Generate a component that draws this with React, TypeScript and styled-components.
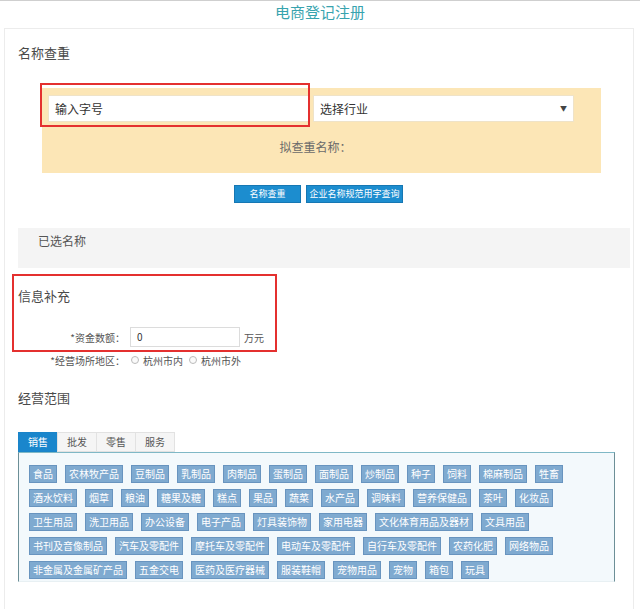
import React from "react";
import styled, { createGlobalStyle } from "styled-components";

const Global = createGlobalStyle`
  html, body { margin: 0; padding: 0; background: #fff; }
  body { font-family: "Noto Sans CJK SC", "Noto Sans", sans-serif; color: #444; }
  * { box-sizing: border-box; }
`;

const Page = styled.div`
  width: 640px;
  height: 609px;
  overflow: hidden;
  border-top: 1px solid #cfcfcf;
`;

const Title = styled.h1`
  margin: 0;
  height: 27px;
  line-height: 22px;
  text-align: center;
  font-size: 15px;
  font-weight: 400;
  color: #38a3ae;
`;

const Panel = styled.div`
  margin: 0 6px 0 4px;
  border: 1px solid #ececec;
  border-bottom: none;
  padding: 16px 0 0 13px;
  height: 582px;
`;

const Heading = styled.div<{ $mt?: number }>`
  margin-top: ${(p) => p.$mt ?? 0}px;
  font-size: 13px;
  line-height: 16px;
  color: #4a4a4a;
`;

const QueryBox = styled.div`
  position: relative;
  margin: 27px 0 0 24px;
  width: 559px;
  background: #fce6b6;
  padding: 7px 6px 18px;
`;

const InputRow = styled.div`
  display: flex;
  gap: 3px;
`;

const TextField = styled.div<{ $w: number }>`
  width: ${(p) => p.$w}px;
  height: 27px;
  background: #fff;
  border: 1px solid #efe3c8;
  font-size: 12px;
  line-height: 25px;
  padding-left: 6px;
  color: #333;
  position: relative;
`;

const Arrow = styled.span`
  position: absolute;
  right: 6px;
  top: 0;
  font-size: 7px;
  color: #444;
`;

const Caption = styled.div`
  margin-top: 17px;
  line-height: 16px;
  text-align: center;
  font-size: 12px;
  color: #6a6a6a;
  padding-right: 12px;
`;

const Annotation = styled.div<{ $l: number; $t: number; $w: number; $h: number }>`
  position: absolute;
  left: ${(p) => p.$l}px;
  top: ${(p) => p.$t}px;
  width: ${(p) => p.$w}px;
  height: ${(p) => p.$h}px;
  border: 2px solid #e4302f;
  pointer-events: none;
`;

const ButtonRow = styled.div`
  margin-top: 12px;
  display: flex;
  justify-content: center;
  gap: 5px;
  padding-right: 14px;
`;

const Button = styled.button<{ $w: number }>`
  width: ${(p) => p.$w}px;
  height: 18px;
  padding: 0;
  border: 1px solid #1677b3;
  background: #1c8dcf;
  color: #fff;
  font-family: inherit;
  font-size: 9px;
  line-height: 16px;
`;

const SelectedBox = styled.div`
  margin-top: 25px;
  width: 612px;
  height: 40px;
  background: #f4f4f4;
  padding: 6px 0 0 20px;
  font-size: 12px;
  line-height: 14px;
  color: #555;
`;

const InfoBlock = styled.div`
  margin: 6px 0 0 -6px;
  width: 265px;
  height: 78px;
  border: 2px solid #e4302f;
  padding: 12px 0 0 4px;
`;

const FormRow = styled.div<{ $mt?: number; $h: number }>`
  margin-top: ${(p) => p.$mt ?? 0}px;
  height: ${(p) => p.$h}px;
  display: flex;
  align-items: center;
  font-size: 10px;
  color: #555;
`;

const Label = styled.div`
  width: 107px;
  text-align: right;
`;

const Amount = styled.div`
  margin-left: 5px;
  width: 110px;
  height: 20px;
  border: 1px solid #dcdcdc;
  padding-left: 6px;
  line-height: 18px;
  font-size: 10px;
  color: #333;
`;

const Unit = styled.span`
  margin-left: 4px;
`;

const Radio = styled.span`
  display: inline-block;
  width: 8px;
  height: 8px;
  border: 1px solid #bbb;
  border-radius: 50%;
  margin: 0 4px 0 6px;
  background: #fafafa;
`;

const Tabs = styled.div`
  margin-top: 26px;
  display: flex;
`;

const Tab = styled.div<{ $active?: boolean }>`
  width: 40px;
  height: 20px;
  line-height: 18px;
  text-align: center;
  font-size: 10px;
  border: 1px solid ${(p) => (p.$active ? "#1a84c9" : "#e2e2e2")};
  background: ${(p) => (p.$active ? "#1a86cc" : "#f5f5f5")};
  color: ${(p) => (p.$active ? "#fff" : "#555")};
  margin-right: -1px;
`;

const TagBox = styled.div`
  width: 597px;
  border: 1px solid #6c8f97;
  border-top-color: #7fb8c6;
  border-bottom-color: #e8f0f3;
  background: #f3f9fc;
  padding: 12px 10px 2px;
  display: flex;
  flex-direction: column;
  gap: 6px;
`;

const TagRow = styled.div`
  display: flex;
  gap: 8px;
`;

const Tag = styled.span`
  height: 18px;
  line-height: 16px;
  padding: 0 3px;
  border: 1px solid #6894bf;
  background: #7faad0;
  color: #fff;
  font-size: 10px;
  white-space: nowrap;
`;

const tagRows: string[][] = [
  ["食品", "农林牧产品", "豆制品", "乳制品", "肉制品", "蛋制品", "面制品", "炒制品", "种子", "饲料", "棉麻制品", "牲畜"],
  ["酒水饮料", "烟草", "粮油", "糖果及糖", "糕点", "果品", "蔬菜", "水产品", "调味料", "营养保健品", "茶叶", "化妆品"],
  ["卫生用品", "洗卫用品", "办公设备", "电子产品", "灯具装饰物", "家用电器", "文化体育用品及器材", "文具用品"],
  ["书刊及音像制品", "汽车及零配件", "摩托车及零配件", "电动车及零配件", "自行车及零配件", "农药化肥", "网络物品"],
  ["非金属及金属矿产品", "五金交电", "医药及医疗器械", "服装鞋帽", "宠物用品", "宠物", "箱包", "玩具"],
];

export default function App() {
  return (
    <Page>
      <Global />
      <Title>电商登记注册</Title>
      <Panel>
        <Heading>名称查重</Heading>
        <QueryBox>
          <InputRow>
            <TextField $w={262}>输入字号</TextField>
            <TextField $w={261}>
              选择行业
              <Arrow>▼</Arrow>
            </TextField>
          </InputRow>
          <Caption>拟查重名称：</Caption>
          <Annotation $l={-2} $t={-5} $w={270} $h={44} />
        </QueryBox>
        <ButtonRow>
          <Button $w={67}>名称查重</Button>
          <Button $w={97}>企业名称规范用字查询</Button>
        </ButtonRow>
        <SelectedBox>已选名称</SelectedBox>
        <InfoBlock>
          <Heading>信息补充</Heading>
          <FormRow $mt={23} $h={20}>
            <Label>*资金数额：</Label>
            <Amount>0</Amount>
            <Unit>万元</Unit>
          </FormRow>
        </InfoBlock>
        <FormRow $h={16}>
          <Label>*经营场所地区：</Label>
          <Radio />
          <span>杭州市内</span>
          <Radio />
          <span>杭州市外</span>
        </FormRow>
        <Heading $mt={22}>经营范围</Heading>
        <Tabs>
          <Tab $active>销售</Tab>
          <Tab>批发</Tab>
          <Tab>零售</Tab>
          <Tab>服务</Tab>
        </Tabs>
        <TagBox>
          {tagRows.map((row, i) => (
            <TagRow key={i}>
              {row.map((t) => (
                <Tag key={t}>{t}</Tag>
              ))}
            </TagRow>
          ))}
        </TagBox>
      </Panel>
    </Page>
  );
}
